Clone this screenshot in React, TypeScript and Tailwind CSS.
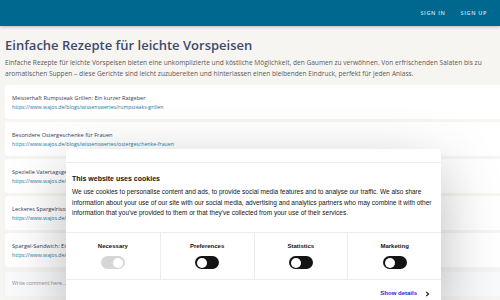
import React from 'react';

const posts = [
  { title: 'Meisterhaft Rumpsteak Grillen: Ein kurzer Ratgeber', url: 'https://www.wajos.de/blogs/wissenswertes/rumpsteaks-grillen' },
  { title: 'Besondere Ostergeschenke für Frauen', url: 'https://www.wajos.de/blogs/wissenswertes/ostergeschenke-frauen' },
  { title: 'Spezielle Vatertagsgeschenke', url: 'https://www.wajos.de/blogs/wissenswertes/vatertagsgeschenke' },
  { title: 'Leckeres Spargelrisotto', url: 'https://www.wajos.de/blogs/wissenswertes/spargelrisotto' },
  { title: 'Spargel-Sandwich: Ein Frühlingsgenuss', url: 'https://www.wajos.de/blogs/wissenswertes/spargel-sandwich' },
];

const consent = [
  { label: 'Necessary', locked: true },
  { label: 'Preferences', locked: false },
  { label: 'Statistics', locked: false },
  { label: 'Marketing', locked: false },
];

const Toggle: React.FC<{ locked: boolean }> = ({ locked }) => (
  <div
    className={`flex h-[13px] w-[24px] items-center rounded-full px-[2px] ${
      locked ? 'justify-end bg-[#d6d6d6]' : 'justify-start bg-[#141414]'
    }`}
  >
    <div className="h-[10px] w-[10px] rounded-full bg-white" />
  </div>
);

const App: React.FC = () => {
  return (
    <div className="relative h-[300px] w-[500px] overflow-hidden bg-[#f7f5f1] font-['Open_Sans',sans-serif]">
      {/* Header */}
      <header className="relative z-10 flex h-[26px] items-center justify-end gap-[15px] bg-[#00688f] pr-[13px] shadow-[0_1px_3px_rgba(0,0,0,0.25)]">
        <span className="text-[5.5px] font-semibold tracking-[0.12em] text-[#cfe3ec]">SIGN IN</span>
        <span className="text-[5.5px] font-semibold tracking-[0.12em] text-[#cfe3ec]">SIGN UP</span>
      </header>

      {/* Content */}
      <main className="pl-[5px] pt-[9px]">
        <h1 className="text-[13px] font-semibold leading-[20px] text-[#3e4a6b]">
          Einfache Rezepte für leichte Vorspeisen
        </h1>
        <p className="mt-[2px] pr-[12px] text-[6.6px] leading-[11px] text-[#5a5a5a]">
          Einfache Rezepte für leichte Vorspeisen bieten eine unkomplizierte und köstliche Möglichkeit, den Gaumen zu verwöhnen. Von erfrischenden Salaten bis zu aromatischen Suppen – diese Gerichte sind leicht zuzubereiten und hinterlassen einen bleibenden Eindruck, perfekt für jeden Anlass.
        </p>

        <div className="mt-[6px] flex flex-col gap-[3px]">
          {posts.map((p) => (
            <div key={p.title} className="flex h-[34px] flex-col justify-center rounded-l-[3px] bg-white pl-[7px]">
              <div className="text-[5.6px] leading-[10px] text-[#334060]">{p.title}</div>
              <div className="text-[5.2px] leading-[9px] text-[#1d7aa3]">{p.url}</div>
            </div>
          ))}
          <div className="mt-[2px] flex h-[24px] items-center rounded-l-[3px] bg-[#f9fafc] pl-[7px]">
            <span className="text-[5.2px] text-[#8a8f99]">Write comment here...</span>
          </div>
        </div>
      </main>

      {/* Cookie dialog */}
      <div className="absolute left-[66px] top-[149px] w-[375px] rounded-t-[4px] bg-white font-['Liberation_Sans',sans-serif] shadow-[0_20px_60px_rgba(0,0,0,0.28)]">
        <div className="h-[14px] border-b border-[#ececec]" />
        <div className="px-[6px] pt-[11px]">
          <div className="text-[7px] font-bold leading-[10px] text-[#141414]">This website uses cookies</div>
          <p className="mt-[3px] text-[6.5px] leading-[10.5px] text-[#141414]">
            We use cookies to personalise content and ads, to provide social media features and to analyse our traffic. We also share information about your use of our site with our social media, advertising and analytics partners who may combine it with other information that you've provided to them or that they've collected from your use of their services.
          </p>
        </div>
        <div className="mt-[13px] grid grid-cols-4 border-y border-[#ececec]">
          {consent.map((c, i) => (
            <div
              key={c.label}
              className={`flex h-[46px] flex-col items-center justify-center gap-[6px] ${i > 0 ? 'border-l border-[#ececec]' : ''}`}
            >
              <span className="text-[6px] font-bold leading-[8px] text-[#141414]">{c.label}</span>
              <Toggle locked={c.locked} />
            </div>
          ))}
        </div>
        <div className="flex h-[28px] items-center justify-end gap-[8px] pr-[11px]">
          <span className="text-[6px] font-bold text-[#1032cf]">Show details</span>
          <svg width="5" height="6" viewBox="0 0 5 6" fill="none">
            <path d="M1.2 0.8 L3.6 3 L1.2 5.2" stroke="#141414" strokeWidth="1.1" />
          </svg>
        </div>
      </div>
    </div>
  );
};

export default App;
